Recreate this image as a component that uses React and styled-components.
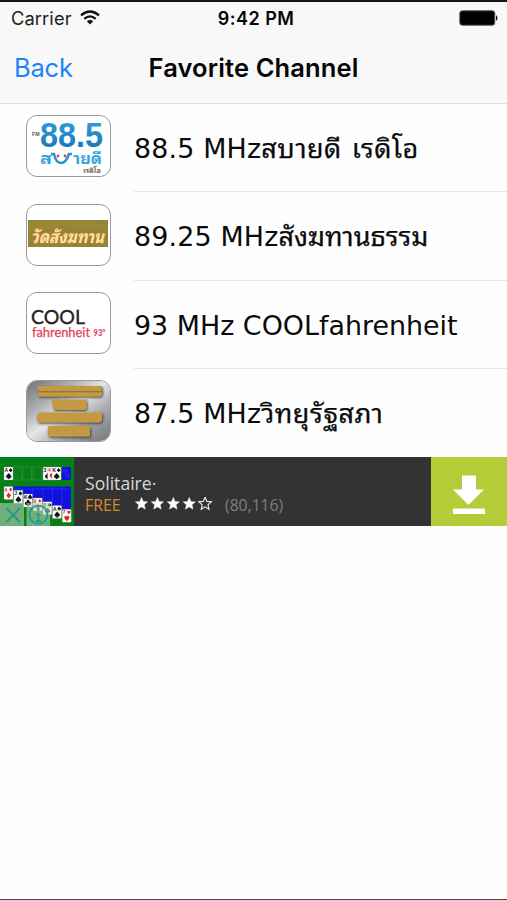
import React from 'react';
import styled, { createGlobalStyle } from 'styled-components';

const GlobalStyle = createGlobalStyle`
  *, *::before, *::after { box-sizing: border-box; }
  body { margin: 0; background: #fff; }
`;

const Screen = styled.main`
  width: 507px;
  height: 900px;
  display: flex;
  flex-direction: column;
  background: #fefefe;
  border-top: 2px solid #151317;
  border-bottom: 1px solid #484848;
  font-family: Inter, 'Liberation Sans', sans-serif;
  color: #050505;
  overflow: hidden;
`;

const Header = styled.header`
  height: 102px;
  flex: none;
  background: #f8f8f8;
  border-bottom: 1px solid #dedede;
`;

const Bar = styled.div`
  display: grid;
  grid-template-columns: 1fr auto 1fr;
  align-items: center;
  height: ${(p) => p.$height}px;
  padding: ${(p) => p.$padding};
`;

const Carrier = styled.div`
  display: flex;
  align-items: center;
  gap: 8px;
  font-size: 18.3px;
  letter-spacing: 0.1px;
  color: #222;
`;

const Clock = styled.time`
  font-size: 18px;
  font-weight: 600;
  letter-spacing: 0.5px;
  padding-left: 3px;
`;

const BatteryIcon = styled.svg`
  justify-self: end;
`;

const BackButton = styled.button`
  justify-self: start;
  padding: 0;
  border: 0;
  background: none;
  font: 400 25.5px Inter, sans-serif;
  letter-spacing: -0.2px;
  color: #1c83fb;
`;

const Title = styled.h1`
  margin: 0;
  font-size: 25.5px;
  font-weight: 600;
  letter-spacing: 0.12px;
`;

const ChannelList = styled.ul`
  list-style: none;
  margin: 0;
  padding: 0;
  height: 353px;
  flex: none;
  display: grid;
  grid-template-rows: repeat(4, 88.3px);
`;

const Channel = styled.li`
  display: flex;
  padding-left: 26px;
  gap: 23px;
`;

const Thumb = styled.div`
  width: 85px;
  height: 62px;
  margin-top: 11.4px;
  flex: none;
  border: 1.2px solid #999;
  border-radius: 11px;
  overflow: hidden;
  background: #fff;
  svg { display: block; }
`;

const ChannelName = styled.div`
  flex: 1;
  display: flex;
  align-items: baseline;
  padding-top: 25px;
  border-bottom: ${(p) => (p.$last ? 'none' : '1px solid #e8e8e8')};
  white-space: pre;
  font-family: 'DejaVu Sans', sans-serif;
  font-size: 26.9px;
  line-height: 40px;
  color: #0b0b0b;
`;

const thaiStack = "'Noto Sans Thai Looped', 'Noto Looped Thai', Loma, Garuda, Waree, Umpush, 'Noto Serif Thai', 'Noto Sans Thai', sans-serif";

const Frequency = styled.span`
  letter-spacing: ${(p) => p.$spacing}px;
`;

const ThaiName = styled.span`
  font-family: ${thaiStack};
  font-size: 27px;
  line-height: 32px;
  letter-spacing: ${(p) => p.$spacing}px;
  word-spacing: ${(p) => p.$wordSpacing || 0}px;
  -webkit-text-stroke: 0.25px currentColor;
`;

const AdBanner = styled.aside`
  display: flex;
  height: 69px;
  flex: none;
  background: #333;
  font-family: 'Open Sans', 'Noto Sans', sans-serif;
`;

const AdCopy = styled.div`
  flex: 1;
  padding: 15px 0 0 11px;
`;

const AdTitle = styled.div`
  font-size: 17.6px;
  line-height: 23px;
  color: #d8d8d8;
`;

const AdMeta = styled.div`
  display: flex;
  align-items: center;
  height: 20px;
`;

const Price = styled.span`
  width: 50px;
  font-size: 15.8px;
  color: #d38b2d;
`;

const Reviews = styled.span`
  margin-left: 12px;
  font-size: 15.7px;
  color: #7e7e7e;
`;

const DownloadButton = styled.button`
  width: 76px;
  padding: 0;
  border: 0;
  background: #b3cc38;
  svg { display: block; }
`;

const WifiIcon = () => (
  <svg width="20" height="16" viewBox="0 0 20 16" fill="none" stroke="#111" strokeWidth="2.3">
    <path d="M1 5.4Q10 -2.3 19 5.4" />
    <path d="M4.3 8.8Q10 4 15.7 8.8" />
    <path d="M6.8 11.2Q10 8.6 13.2 11.2L10 14.5Z" fill="#111" stroke="none" />
  </svg>
);

const Battery = () => (
  <BatteryIcon width="39" height="16" viewBox="0 0 39 16">
    <rect x="0.8" y="0.8" width="35" height="14.4" rx="2.5" fill="#000" stroke="#555" />
    <path d="M37 5Q40 8 37 11Z" fill="#111" />
  </BatteryIcon>
);

const SabaidiLogo = () => (
  <svg width="83" height="60" viewBox="27 117 83 60">
    <defs>
      <linearGradient id="blue" x1="0" y1="0" x2="0" y2="1">
        <stop offset="0" stopColor="#35a5dc" />
        <stop offset="1" stopColor="#1670b4" />
      </linearGradient>
    </defs>
    <text x="32" y="137" fontFamily="Liberation Sans" fontWeight="700" fontSize="5" textLength="7.5" lengthAdjust="spacingAndGlyphs" fill="#555">FM</text>
    <text x="40" y="148" fontFamily="Liberation Sans" fontWeight="700" fontSize="35" textLength="63" lengthAdjust="spacingAndGlyphs" fill="url(#blue)">88.5</text>
    <g fontFamily={thaiStack} fontWeight="700">
      <text x="40" y="165" fontSize="16" textLength="12" lengthAdjust="spacingAndGlyphs" fill="#35a5dc">ส</text>
      <text x="73" y="165" fontSize="16" textLength="29" lengthAdjust="spacingAndGlyphs" fill="#35a5dc">ายดี</text>
      <text x="83" y="174" fontSize="7.5" textLength="18" lengthAdjust="spacingAndGlyphs" fill="#666">เรดิโอ</text>
    </g>
    <path d="M51 155H54Q56 164 61 164T69 155H72" fill="none" stroke="#2697d0" strokeWidth="2.5" />
    <circle cx="58" cy="157" r="1.4" fill="#e53c51" />
    <circle cx="65" cy="157" r="1.4" fill="#e53c51" />
  </svg>
);

const TempleLogo = () => (
  <svg width="83" height="60" viewBox="27 205 83 60">
    <rect x="28" y="220" width="80" height="27" fill="#92843a" />
    <path d="M28 223l30-2 50 3v5l-46-3-34 8z" fill="#a08a35" opacity=".6" />
    <text x="31" y="243" fontFamily={thaiStack} fontWeight="700" fontStyle="italic" fontSize="17" textLength="73" lengthAdjust="spacingAndGlyphs" fill="#ffe2a3" stroke="#d77c24" strokeWidth=".8" paintOrder="stroke">วัดสังฆทาน</text>
  </svg>
);

const CoolLogo = () => (
  <svg width="83" height="60" viewBox="27 293 83 60">
    <g fontFamily="Lato">
      <text x="31" y="323.5" fontSize="20" textLength="54" lengthAdjust="spacingAndGlyphs" fill="#222" stroke="#222" strokeWidth=".35">COOL</text>
      <text x="32" y="336.5" fontSize="13" textLength="58" lengthAdjust="spacingAndGlyphs" fill="#e43f55" stroke="#e43f55" strokeWidth=".25">fahrenheit</text>
      <text x="93.5" y="335.8" fontSize="8.5" fontWeight="900" textLength="12" lengthAdjust="spacingAndGlyphs" fill="#e43f55">93°</text>
    </g>
  </svg>
);

const ParliamentLogo = () => (
  <svg width="83" height="60" viewBox="27 382 83 60">
    <defs>
      <linearGradient id="steel" x1="0" y1="0" x2="1" y2="1">
        <stop offset="0" stopColor="#707174" />
        <stop offset=".3" stopColor="#b3b4b6" />
        <stop offset=".48" stopColor="#e5e7e9" />
        <stop offset=".7" stopColor="#a7a9ac" />
        <stop offset="1" stopColor="#747578" />
      </linearGradient>
      <filter id="plate-shadow"><feDropShadow dx=".8" dy="1.2" stdDeviation="1" floodColor="#222" floodOpacity=".8" /></filter>
    </defs>
    <rect x="27" y="382" width="83" height="60" fill="url(#steel)" />
    <g fill="#c19a42" filter="url(#plate-shadow)">
      <path d="M37.5 387H102V394Q102 397.5 99 397.5H40Q38.5 397.5 38 394Z" />
      <path d="M52 400.5H86.5V408Q86.5 411 83.5 411H55Q53 411 53 408Z" />
      <path d="M39 413.5H102V420Q102 423.5 98 423.5H40Q37 423.5 37 420V416Z" />
      <path d="M49 427H88Q90 427 90 429.5V437.5H51Q48 437.5 48 435V428Z" />
    </g>
    <path d="M38 392.7H102" stroke="#806839" strokeWidth="1.1" />
  </svg>
);

const suitPaths = {
  '♦': 'M0 -3L2.4 0 0 3 -2.4 0Z',
  '♥': 'M0 3L-2.6 0Q-3 -3 -.8 -2.5L0 -1.6 .8 -2.5Q3 -3 2.6 0Z',
  '♠': 'M0 -3L2.7 0Q3 2.5 .6 1.7L1.2 3H-1.2L-.6 1.7Q-3 2.5 -2.7 0Z',
  '♣': 'M-1.3 -1.2A1.5 1.5 0 1 1 1.3 -1.2A1.6 1.6 0 1 1 .7 1.6L1.2 3H-1.2L-.7 1.6A1.6 1.6 0 1 1 -1.3 -1.2Z',
};

const Card = ({ x, y, rank, suit, red }) => (
  <g transform={`translate(${x} ${y})`} fill={red ? '#e02a32' : '#151515'} fontFamily="Liberation Sans" fontWeight="700">
    <rect width="9" height="13" rx=".7" fill="#fff" stroke="#888" strokeWidth=".3" />
    <text x=".5" y="5" fontSize="5">{rank}</text>
    <path d={suitPaths[suit]} transform="translate(6.7 3) scale(.65)" />
    <path d={suitPaths[suit]} transform="translate(4.7 9)" />
  </g>
);

const cascade = [
  ['4', '♦', true], ['J', '♠'], ['K', '♣'], ['9', '♦', true], ['8', '♠'], ['A', '♠'], ['7', '♥', true],
];

const SolitaireArt = () => (
  <svg width="74" height="69" viewBox="0 0 74 69">
    <rect width="74" height="69" fill="#078017" />
    {[13, 23, 33].map((x) => <rect key={x} x={x} y="10" width="8.5" height="13" fill="none" stroke="#369642" strokeWidth=".6" />)}
    <Card x={4} y={10} rank="A" suit="♠" />
    <Card x={43} y={10} rank="3" suit="♠" />
    <Card x={47.6} y={10} rank="4" suit="♥" red />
    <Card x={52} y={10} rank="K" suit="♠" />
    <rect x="62" y="10" width="9" height="13" fill="#1111df" />
    <path d="M63 11l7 11M63 14l5 8M65 11l5 8" stroke="#4646f0" strokeWidth=".5" />
    <path d="M13 29.5H71V53H62V49H52V45H43V41H33V37H23V33H13Z" fill="#1010df" />
    <path d="M23 30V35M33 30V39M43 30V43M52.5 30V47M62 30V51M14 32H70" stroke="#3b3bf0" strokeWidth=".6" />
    {cascade.map(([rank, suit, red], i) => (
      <Card key={i} x={4 + i * 9.7} y={29.5 + i * 3.8} rank={rank} suit={suit} red={red} />
    ))}
    <path d="M0 46H24V69H0ZM26.5 46H50V69H26.5Z" fill="#b9ceba" opacity=".6" />
    <path d="M6.5 51L20 65M20 51L6.5 65" stroke="#239b91" strokeWidth="1.9" />
    <circle cx="38.4" cy="57.7" r="9" fill="none" stroke="#239b91" strokeWidth="1.8" />
    <path d="M38.4 51V54M38.4 56V64M36 57H38.4M36 64H41" stroke="#239b91" strokeWidth="1.8" />
  </svg>
);

const starPath = 'M6.5 .3L8.3 4.4 12.8 4.8 9.4 7.8 10.4 12.3 6.5 9.9 2.6 12.3 3.6 7.8 .2 4.8 4.7 4.4Z';

const Rating = () => (
  <svg width="78" height="17" viewBox="0 0 78 17">
    {[0, 1, 2, 3, 4].map((i) => (
      <path key={i} transform={`translate(${i * 15.9} 0)`} d={starPath} fill={i < 4 ? '#fff' : 'none'} stroke="#eee" strokeWidth={i < 4 ? 0.3 : 1.1} />
    ))}
  </svg>
);

const DownloadIcon = () => (
  <svg width="76" height="69" viewBox="0 0 76 69" fill="#fff">
    <path d="M31 18.5H45V32.5H53L37.5 48L22 32.5H31Z" />
    <rect x="22" y="51.5" width="32" height="5.5" />
  </svg>
);

const channels = [
  { frequency: '88.5 MHz', latinSpacing: 0.15, name: 'สบายดี เรดิโอ', spacing: 0.5, wordSpacing: 2.5, Logo: SabaidiLogo },
  { frequency: '89.25 MHz', latinSpacing: 0.15, name: 'สังฆทานธรรม', spacing: 0, Logo: TempleLogo },
  { frequency: '93 MHz COOLfahrenheit', latinSpacing: 0, name: '', spacing: 0, Logo: CoolLogo },
  { frequency: '87.5 MHz', latinSpacing: 0.15, name: 'วิทยุรัฐสภา', spacing: 0.5, Logo: ParliamentLogo },
];

export default function App() {
  return (
    <>
      <GlobalStyle />
      <Screen>
        <Header>
          <Bar $height={32} $padding="0 9px 0 11px">
            <Carrier>Carrier <WifiIcon /></Carrier>
            <Clock>9:42 PM</Clock>
            <Battery />
          </Bar>
          <Bar $height={67} $padding="0 14px">
            <BackButton>Back</BackButton>
            <Title>Favorite Channel</Title>
          </Bar>
        </Header>
        <ChannelList>
          {channels.map(({ frequency, latinSpacing, name, spacing, wordSpacing, Logo }, i) => (
            <Channel key={frequency}>
              <Thumb><Logo /></Thumb>
              <ChannelName $last={i === channels.length - 1}>
                <Frequency $spacing={latinSpacing}>{frequency}</Frequency>
                {name && <ThaiName $spacing={spacing} $wordSpacing={wordSpacing}>{name}</ThaiName>}
              </ChannelName>
            </Channel>
          ))}
        </ChannelList>
        <AdBanner>
          <SolitaireArt />
          <AdCopy>
            <AdTitle>Solitaire·</AdTitle>
            <AdMeta>
              <Price>FREE</Price>
              <Rating />
              <Reviews>(80,116)</Reviews>
            </AdMeta>
          </AdCopy>
          <DownloadButton aria-label="Download"><DownloadIcon /></DownloadButton>
        </AdBanner>
      </Screen>
    </>
  );
}
